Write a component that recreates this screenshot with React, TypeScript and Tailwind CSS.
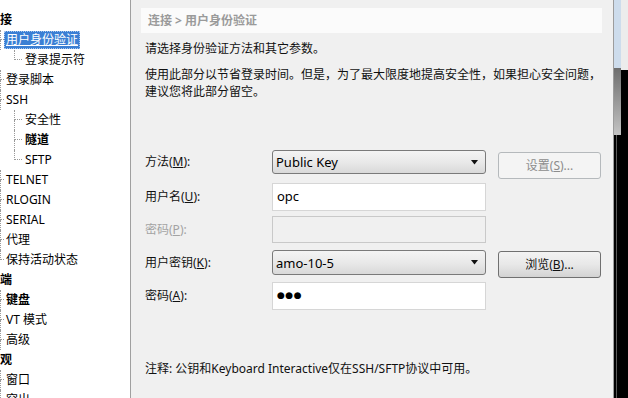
import React from "react";

type Item = { t: string; lvl: 0 | 1 | 2; bold?: boolean; sel?: boolean; last?: boolean };

const items: Item[] = [
  { t: "接", lvl: 0, bold: true },
  { t: "用户身份验证", lvl: 1, sel: true },
  { t: "登录提示符", lvl: 2, last: true },
  { t: "登录脚本", lvl: 1 },
  { t: "SSH", lvl: 1 },
  { t: "安全性", lvl: 2 },
  { t: "隧道", lvl: 2, bold: true },
  { t: "SFTP", lvl: 2, last: true },
  { t: "TELNET", lvl: 1 },
  { t: "RLOGIN", lvl: 1 },
  { t: "SERIAL", lvl: 1 },
  { t: "代理", lvl: 1 },
  { t: "保持活动状态", lvl: 1, last: true },
  { t: "端", lvl: 0, bold: true },
  { t: "键盘", lvl: 1, bold: true },
  { t: "VT 模式", lvl: 1 },
  { t: "高级", lvl: 1 },
  { t: "观", lvl: 0, bold: true },
  { t: "窗口", lvl: 1 },
  { t: "突出", lvl: 1 },
];

function Connector({ w, last }: { w: string; last?: boolean }) {
  return (
    <div className={`flex flex-col h-[20px] shrink-0 ${w}`}>
      <div className="h-[10px] border-l border-b border-dotted border-[#9a9a9a]" />
      <div className={`h-[10px] ${last ? "" : "border-l border-dotted border-[#9a9a9a]"}`} />
    </div>
  );
}

function TreeRow({ it }: { it: Item }) {
  const txt = `text-[12px] leading-[16px] ${it.bold ? "font-bold" : ""}`;
  if (it.lvl === 0) {
    return (
      <div className="flex items-center h-[20px]">
        <span className={`${txt} text-black`}>{it.t}</span>
      </div>
    );
  }
  if (it.lvl === 1) {
    return (
      <div className="flex items-center h-[20px]">
        <Connector w="w-[4px]" last={it.last} />
        {it.sel ? (
          <span className={`${txt} text-white bg-[#3b7fd4] px-[1px] border border-dotted border-[#a9c8ef] underline`}>
            {it.t}
          </span>
        ) : (
          <span className={`${txt} text-black ml-[2px]`}>{it.t}</span>
        )}
      </div>
    );
  }
  return (
    <div className="flex items-center h-[20px]">
      <div className="w-[14px] h-[20px] shrink-0" />
      <Connector w="w-[8px]" last={it.last} />
      <span className={`${txt} text-black ml-[3px]`}>{it.t}</span>
    </div>
  );
}

function Arrow() {
  return (
    <svg width="8" height="5" viewBox="0 0 8 5" className="shrink-0">
      <path d="M0 0 H7 L3.5 4.5 Z" fill="#111" />
    </svg>
  );
}

function Select({ value }: { value: string }) {
  return (
    <div className="w-[214px] h-full rounded-[3px] border border-[#7a7a7a] bg-gradient-to-b from-[#f4f4f4] via-[#e9e9e9] to-[#d9d9d9] flex items-center pl-[3px] pr-[6px] justify-between">
      <span className="text-[13px] text-black leading-[16px]">{value}</span>
      <Arrow />
    </div>
  );
}

function Label({ children, disabled }: { children: React.ReactNode; disabled?: boolean }) {
  return (
    <div className={`w-[127px] shrink-0 text-[12px] leading-[16px] ${disabled ? "text-[#a3a3a3]" : "text-[#111]"}`}>
      {children}
    </div>
  );
}

export default function App() {
  return (
    <div className="w-[628px] h-[398px] overflow-hidden flex bg-[#f0f0f0] font-['Noto_Sans','Noto_Sans_CJK_SC',sans-serif]">
      {/* Tree */}
      <div className="w-[131px] shrink-0 bg-white border-r border-[#a0a0a0] pt-[10px] overflow-hidden">
        {items.map((it, i) => (
          <TreeRow key={i} it={it} />
        ))}
      </div>

      {/* Main */}
      <div className="w-[482px] shrink-0 flex flex-col">
        <div className="mt-[8px] ml-[10px] w-[461px] h-[25px] bg-[#fbfbfb] flex items-center pl-[7px]">
          <span className="text-[12px] font-bold text-[#9a9a9a]">连接 &gt; 用户身份验证</span>
        </div>

        <div className="ml-[14px] mt-[7px] text-[12px] leading-[17px] text-[#111]">
          <p>请选择身份验证方法和其它参数。</p>
          <p className="mt-[9px]">
            使用此部分以节省登录时间。但是，为了最大限度地提高安全性，如果担心安全问题，
            <br />
            建议您将此部分留空。
          </p>
        </div>

        <div className="ml-[14px] mt-[50px] flex flex-col">
          {/* Row 1 */}
          <div className="flex items-start h-[24px]">
            <div className="h-[24px] flex items-center">
              <Label>
                方法(<u>M</u>):
              </Label>
            </div>
            <div className="h-[24px]">
              <Select value="Public Key" />
            </div>
            <div className="ml-[12px] mt-[2px] w-[103px] h-[27px] rounded-[3px] border border-[#b5b9bc] bg-[#f4f4f4] flex items-center justify-center text-[12px] text-[#8c8c8c]">
              设置(<u>S</u>)...
            </div>
          </div>

          {/* Row 2 */}
          <div className="flex items-center h-[28px] mt-[9px]">
            <Label>
              用户名(<u>U</u>):
            </Label>
            <div className="w-[214px] h-[28px] bg-white border border-[#d6d6d6] flex items-center pl-[4px] text-[13px] text-black">
              opc
            </div>
          </div>

          {/* Row 3 */}
          <div className="flex items-center h-[27px] mt-[5px]">
            <Label disabled>
              密码(<u>P</u>):
            </Label>
            <div className="w-[214px] h-[27px] bg-[#f0f0f0] border border-[#c9c9c9]" />
          </div>

          {/* Row 4 */}
          <div className="flex items-start h-[25px] mt-[7px]">
            <div className="h-[25px] flex items-center">
              <Label>
                用户密钥(<u>K</u>):
              </Label>
            </div>
            <div className="h-[25px]">
              <Select value="amo-10-5" />
            </div>
            <div className="ml-[12px] mt-[1px] w-[103px] h-[27px] rounded-[3px] border border-[#707070] bg-gradient-to-b from-[#f3f3f3] via-[#e8e8e8] to-[#d3d3d3] flex items-center justify-center text-[12px] text-[#111]">
              浏览(<u>B</u>)...
            </div>
          </div>

          {/* Row 5 */}
          <div className="flex items-center h-[28px] mt-[7px]">
            <Label>
              密码(<u>A</u>):
            </Label>
            <div className="w-[214px] h-[28px] bg-white border border-[#d6d6d6] flex items-center pl-[4px] text-[9px] text-black font-['DejaVu_Sans',sans-serif] tracking-[0.5px]">
              ●●●
            </div>
          </div>
        </div>

        <div className="ml-[14px] mt-[50px] text-[12px] leading-[17px] text-[#111]">
          注释: 公钥和Keyboard Interactive仅在SSH/SFTP协议中可用。
        </div>
      </div>

      {/* Right window chrome */}
      <div className="w-[15px] shrink-0 flex">
        <div className="w-[1px] bg-[#9c9c9c]" />
        <div className="w-[7px] flex flex-col">
          <div className="h-[68px] bg-[#cddcec]" />
          <div className="h-[67px] bg-gradient-to-b from-[#6e6e6e] to-[#c4c4c4]" />
          <div className="flex-1 bg-black flex">
            <div className="w-[2px]" />
            <div className="w-[1px] bg-[#5a5a5a]" />
          </div>
        </div>
        <div className="w-[7px] flex flex-col">
          <div className="h-[70px] bg-[#ececec]" />
          <div className="flex-1 bg-black" />
        </div>
      </div>
    </div>
  );
}
